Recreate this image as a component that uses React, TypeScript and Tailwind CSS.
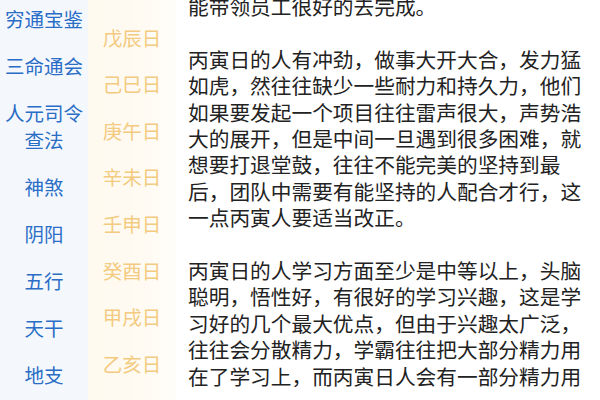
import { FC } from "react"

const books: string[][] = [
  ["穷通宝鉴"],
  ["三命通会"],
  ["人元司令", "查法"],
  ["神煞"],
  ["阴阳"],
  ["五行"],
  ["天干"],
  ["地支"],
]

const days = ["戊辰日", "己巳日", "庚午日", "辛未日", "壬申日", "癸酉日", "甲戌日", "乙亥日"]

const paragraphs = [
  "能带领员工很好的去完成。",
  "丙寅日的人有冲劲，做事大开大合，发力猛如虎，然往往缺少一些耐力和持久力，他们如果要发起一个项目往往雷声很大，声势浩大的展开，但是中间一旦遇到很多困难，就想要打退堂鼓，往往不能完美的坚持到最后，团队中需要有能坚持的人配合才行，这一点丙寅人要适当改正。",
  "丙寅日的人学习方面至少是中等以上，头脑聪明，悟性好，有很好的学习兴趣，这是学习好的几个最大优点，但由于兴趣太广泛，往往会分散精力，学霸往往把大部分精力用在了学习上，而丙寅日人会有一部分精力用",
]

const App: FC = (): JSX.Element => {
  return (
    <div
      className="flex h-[400px] w-[600px] overflow-hidden bg-white"
      style={{ fontFamily: '"Noto Sans CJK SC", "Noto Sans", sans-serif' }}
    >
      {/* category list */}
      <div className="w-[88px] shrink-0 bg-[#f4f8fd]">
        <div className="-mt-[5px] flex flex-col">
          {books.map((b) => (
            <div key={b[0]} className="flex flex-col items-center py-[10px] text-[19.5px] leading-[27px] text-[#2a6dc6]">
              {b.map((line) => (
                <span key={line}>{line}</span>
              ))}
            </div>
          ))}
        </div>
      </div>

      {/* day list */}
      <div className="w-[88px] shrink-0 bg-gradient-to-r from-[#fffaf0] via-[#fffaf1] to-[#fffdf9]">
        <div className="flex flex-col pt-[14px]">
          {days.map((d) => (
            <div key={d} className="flex h-[46.6px] items-center justify-center text-[19.5px] text-[#f3cb80]">
              {d}
            </div>
          ))}
        </div>
      </div>

      {/* article */}
      <div className="flex-1 pl-[12px] pr-[8px]">
        <div className="-mt-[7px] text-[20.7px] leading-[26.4px] text-[#222222]">
          {paragraphs.map((p, i) => (
            <p key={i} className="mb-[26.4px]">{p}</p>
          ))}
        </div>
      </div>
    </div>
  )
}

export default App
